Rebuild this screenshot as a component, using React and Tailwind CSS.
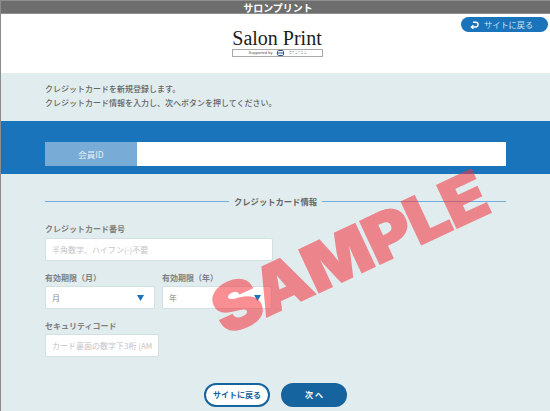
import React from 'react';

const jp = "font-['Noto_Sans_CJK_JP','Noto_Sans',sans-serif]";

const Label = ({ children }) => (
    <div className="h-[12px] text-[8px] leading-[12px] font-bold text-[#808080]">{children}</div>
);

const TextField = ({ placeholder, className }) => (
    <input
        readOnly
        placeholder={placeholder}
        className={`block h-[23px] rounded-[2px] border border-[#d3e0e4] bg-white px-[6px] text-[8px] outline-none placeholder:text-[#c2c4c8] ${className}`}
    />
);

const SelectBox = ({ value }) => (
    <div className="flex h-[23px] w-[110px] items-center justify-between rounded-[2px] border border-[#d3e0e4] bg-white pl-[6px] pr-[10px] text-[8px] text-[#8a8a8a]">
        <span>{value}</span>
        <svg width="7" height="6" viewBox="0 0 7 6"><path d="M0 0h7L3.5 6z" fill="#1a74bb" /></svg>
    </div>
);

const BackIcon = () => (
    <svg width="9" height="8" viewBox="0 0 9 8" fill="none" stroke="white" strokeWidth="1.4">
        <path d="M3 1.2h2.7a2.4 2.4 0 0 1 0 4.8H1.5" />
        <path d="M3.4 4.2 1.4 6l2 1.8" />
    </svg>
);

const App = () => {
    return (
        <div className={`relative flex h-[411px] w-[550px] flex-col overflow-hidden border-l border-[#8c8c8c] bg-[#e0ecee] ${jp}`}>
            <div className="h-[14px] border-y border-[#8f8f8f] bg-[#6e6e6e] pl-[5px] text-center text-[10px] font-bold leading-[13px] text-white">
                サロンプリント
            </div>

            <header className="relative flex h-[59px] flex-col items-center bg-white pl-[3px] pt-[14px]">
                <div className="font-['Liberation_Serif',serif] text-[20px] leading-[20px] text-[#1c1c1c]">Salon Print</div>
                <div className="mt-[1px] flex h-[8px] w-[91px] items-center justify-center gap-[5px] border border-[#a9a9a9] font-['Liberation_Sans',sans-serif] text-[4px] leading-none text-[#555555]">
                    <span>Supported by</span>
                    <svg width="7" height="6" viewBox="0 0 7 6"><rect x="0.5" y="0.5" width="6" height="5" rx="1.2" fill="none" stroke="#2d4f8e" /><path d="M0 3h7" stroke="#2d4f8e" /></svg>
                    <span className="w-[16px] text-[2.5px] leading-[2.5px] tracking-[1.2px]">BEAUTY GARAGE</span>
                </div>
                <button className="absolute right-[2px] top-[3px] flex h-[15px] w-[87px] items-center gap-[5px] rounded-full bg-[#1a74bb] pl-[9px] text-[8.2px] text-[#cfe2f2]">
                    <BackIcon />
                    <span>サイトに戻る</span>
                </button>
            </header>

            <p className="h-[48px] px-[44px] pt-[9px] text-[8px] font-medium leading-[14px] text-[#666666]">
                クレジットカードを新規登録します。<br />
                クレジットカード情報を入力し、次へボタンを押してください。
            </p>

            <section className="h-[53px] bg-[#1a74bb] px-[44px] pt-[21px]">
                <div className="flex h-[24px] w-[461px] bg-white">
                    <div className="flex w-[92px] items-center justify-center bg-[#78abd6] text-[8.5px] text-[#e6f0f8]">会員ID</div>
                </div>
            </section>

            <div className="px-[44px]">
                <div className="mt-[22px] flex h-[10px] w-[461px] items-center">
                    <span className="h-px flex-1 bg-[#74acdc]" />
                    <span className="px-[5px] text-[8.3px] font-bold text-[#666666]">クレジットカード情報</span>
                    <span className="h-px flex-1 bg-[#74acdc]" />
                </div>

                <div className="mt-[17px]"><Label>クレジットカード番号</Label></div>
                <TextField placeholder="半角数字、ハイフン(-)不要" className="mt-[3px] w-[228px]" />

                <div className="mt-[11px] flex gap-[7px]">
                    <div>
                        <Label>有効期限（月）</Label>
                        <div className="mt-[2px]"><SelectBox value="月" /></div>
                    </div>
                    <div>
                        <Label>有効期限（年）</Label>
                        <div className="mt-[2px]"><SelectBox value="年" /></div>
                    </div>
                </div>

                <div className="mt-[11px]"><Label>セキュリティコード</Label></div>
                <TextField placeholder="カード裏面の数字下3桁 (AMEX 4桁)" className="mt-[2px] w-[114px]" />

                <div className="mt-[26px] flex justify-center gap-[11px]">
                    <button className="h-[24px] w-[66px] rounded-full border-2 border-[#15639f] bg-white text-[8px] font-bold text-[#15639f]">サイトに戻る</button>
                    <button className="h-[24px] w-[66px] rounded-full bg-[#15639f] text-[8px] font-bold text-white">次 へ</button>
                </div>
            </div>

            {/* watermark lies over the form */}
            <div className="pointer-events-none absolute left-[214px] top-[217px] origin-center -rotate-[25deg] scale-x-[1.1] font-['Inter',sans-serif] text-[65px] font-black leading-[72px] tracking-[-1px] text-[#f5323c] opacity-55 [-webkit-text-stroke:1.5px_#f5323c]">
                SAMPLE
            </div>
        </div>
    );
};

export default App;
